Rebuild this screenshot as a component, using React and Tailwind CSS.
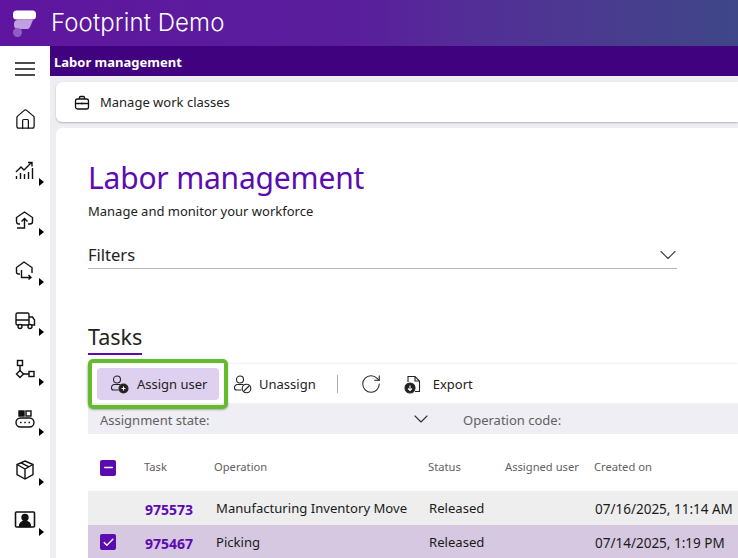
import { Home, RotateCw, ChevronDown, Check, Minus } from 'lucide-react';

const FONT = "font-['Noto_Sans','Open_Sans',sans-serif]";

const iconProps = { width: 22, height: 22, viewBox: '0 0 22 22', fill: 'none', stroke: '#111', strokeWidth: 1.4 };

const NAV_ICONS = [
  <svg {...iconProps}>
    <path d="M2 13l5-5 3 3 7-7M14 3.500h4v4" />
    <path d="M2.500 20v-3M6.500 20v-6M10.500 20v-5M14.500 20v-7M18.500 20V9" />
  </svg>,
  <svg {...iconProps}>
    <path d="M6 15H4.500A2.500 2.500 0 0 1 2.500 12.500V8.500L10.500 3l8 5.500v4a2.500 2.500 0 0 1-2.500 2.500h-2" />
    <path d="M3 19h7.500V10M7.500 12.500l3-3 3 3" />
  </svg>,
  <svg {...iconProps}>
    <path d="M6 15H4.500A2 2 0 0 1 2.500 13V8.500L10 3l8 5.500V14" />
    <path d="M7.500 11v7.500H17M14.500 16l2.500 2.500-2.500 2" />
  </svg>,
  <svg {...iconProps}>
    <rect x="2" y="4" width="13" height="12" rx="1.500" />
    <path d="M15 8h3.500l2 3v5H15M2 11h13" />
    <circle cx="6" cy="17.500" r="2" fill="#fff" />
    <circle cx="16" cy="17.500" r="2" fill="#fff" />
  </svg>,
  <svg {...iconProps}>
    <rect x="3.500" y="1.500" width="5" height="5" />
    <path d="M6 6.500v5.500M9 15h6" />
    <path d="M6 11.500l3.500 3.500L6 18.500 2.500 15z" />
    <rect x="15" y="12.500" width="5" height="5" />
  </svg>,
  <svg {...iconProps}>
    <rect x="5" y="2" width="5" height="5" fill="#111" />
    <rect x="12" y="2" width="5" height="5" />
    <rect x="2" y="9" width="18" height="9" rx="4.500" />
    <path d="M6 13.500h1.500M10.250 13.500h1.500M14.500 13.500H16" />
  </svg>,
  <svg {...iconProps}>
    <path d="M11 2l8 3.500v10L11 20l-8-4.500v-10z" />
    <path d="M3 5.500L11 10l8-4.500M11 10v10M7 3.800l8 4" />
  </svg>,
  <svg {...iconProps}>
    <rect x="1.500" y="3" width="19" height="15" rx="1" strokeWidth="1.600" />
    <circle cx="11" cy="8.500" r="3" fill="#111" />
    <path d="M5.500 17.500c0-3.500 2.500-5 5.500-5s5.500 1.500 5.500 5z" fill="#111" />
  </svg>,
];

function NavItem({ icon }) {
  return (
    <div className="relative flex h-[50px] w-[50px] shrink-0 items-center justify-center">
      {icon}
      <span className="absolute bottom-[9px] right-[6px] h-0 w-0 border-y-[4px] border-l-[5px] border-y-transparent border-l-black" />
    </div>
  );
}

function UserIcon({ badge }) {
  return (
    <svg width="20" height="20" viewBox="0 0 20 20" fill="none" stroke="#222" strokeWidth="1.100">
      <circle cx="8" cy="5.500" r="3.500" />
      <path d="M9.500 16H4.500A2 2 0 0 1 2.500 14v-.5A3 3 0 0 1 5.500 10.500h6" />
      {badge === 'add' && (
        <>
          <circle cx="14.500" cy="14.500" r="4.500" fill="#222" />
          <path d="M12.500 14.500h4M14.500 12.500v4" stroke="#fff" />
        </>
      )}
      {badge === 'block' && (
        <>
          <circle cx="14.500" cy="14.500" r="4.300" fill="#fff" />
          <path d="M11.500 17.500l6-6" />
        </>
      )}
    </svg>
  );
}

function ExportIcon() {
  return (
    <svg width="18" height="20" viewBox="0 0 18 20" fill="none" stroke="#222" strokeWidth="1.100">
      <path d="M4 8V2.500h7l4.500 4.500v10.500H11M11 2.500V7h4.500" />
      <circle cx="6" cy="14" r="5" fill="#222" />
      <path d="M6 11.500v5M4 14.500l2 2 2-2" stroke="#fff" />
    </svg>
  );
}

function Row({ id, operation, created, selected }) {
  return (
    <div className={`grid h-[34px] grid-cols-[57px_71px_213px_77px_89px_1fr] items-center whitespace-nowrap pt-[2px] text-[13.100px] text-[#1b1b1b] ${selected ? 'bg-[#d6c8e0]' : 'bg-[#eeeeee]'}`}>
      <div className="-mt-[2px] pl-3">
        {selected && (
          <span className="flex h-4 w-4 items-center justify-center rounded-[2px] bg-[#5c0bb0]">
            <Check size={13} color="#fff" strokeWidth={2.500} />
          </span>
        )}
      </div>
      <span className="text-[14px] font-bold text-[#5c0bb0]">{id}</span>
      <span>{operation}</span>
      <span>Released</span>
      <span />
      <span className="text-[13.500px]">{created}</span>
    </div>
  );
}

export default function App() {
  return (
    <div className={`flex h-[558px] w-[738px] flex-col overflow-hidden bg-white ${FONT}`}>
      <header className="flex h-[46px] shrink-0 items-center bg-gradient-to-r from-[#5f159f] via-[#591f9c] to-[#3e4688] pl-[13px]">
        <svg width="24" height="27" viewBox="0 0 24 27">
          <rect x="0" y="0.500" width="23" height="9" rx="3.500" fill="#fff" />
          <path d="M1 14a4 4 0 0 1 4-4h15l-3 7a3 3 0 0 1-3 2H5a4 4 0 0 1-4-4z" fill="#bfa0e0" />
          <circle cx="4.500" cy="22.500" r="4.500" fill="#8d5fc0" />
        </svg>
        <span className="ml-[14px] font-['Inter',sans-serif] text-[24px] font-light tracking-[0.1px] text-white">Footprint Demo</span>
      </header>

      <div className="flex min-h-0 flex-1">
        <nav className="flex w-[50px] shrink-0 flex-col items-center bg-white">
          <div className="flex h-[45px] w-[50px] items-center justify-center">
            <svg width="20" height="14" viewBox="0 0 20 14" stroke="#111" strokeWidth="1.300">
              <path d="M0 1h20M0 7h20M0 13h20" />
            </svg>
          </div>
          <div className="flex h-[54px] w-[50px] shrink-0 items-center justify-center pt-[3px]">
            <Home size={23} strokeWidth={1.300} color="#111" />
          </div>
          {NAV_ICONS.map((icon, i) => (
            <NavItem key={i} icon={icon} />
          ))}
        </nav>

        <div className="flex min-w-0 flex-1 flex-col bg-[#eeedf3]">
          <div className="flex h-[30px] shrink-0 items-center bg-[#40027e] pl-1 pt-[4px] text-[13px] font-bold text-white">
            Labor management
          </div>

          <div className="ml-[6px] mt-[6px] flex h-[40px] shrink-0 items-center rounded-l-md bg-white pl-[18px] pt-[1px] text-[13px] text-[#222] shadow-[0_1px_2px_rgba(0,0,0,0.25)]">
            <svg width="16" height="16" viewBox="0 0 16 16" fill="none" stroke="#111" strokeWidth="1.300">
              <rect x="1.500" y="4" width="13" height="10" rx="2" />
              <path d="M5.500 4V2.500a1 1 0 0 1 1-1h3a1 1 0 0 1 1 1V4M1.500 8.500h13M8 7.500v2" />
            </svg>
            <span className="ml-[10px]">Manage work classes</span>
          </div>

          <main className="ml-[6px] mt-[6px] min-h-0 flex-1 rounded-tl-md bg-white pl-8 pt-[30px]">
            <h1 className="text-[30px] leading-10 tracking-[-0.2px] text-[#5c0bb0]">Labor management</h1>
            <p className="mt-[3px] text-[13px] leading-[20px] text-[#222]">Manage and monitor your workforce</p>

            <div className="mt-[14px] flex h-[34px] w-[589px] items-center justify-between border-b border-[#b5b5b5] pt-[6px] text-[16.500px] text-[#222]">
              <span className="mt-[2px]">Filters</span>
              <ChevronDown size={28} strokeWidth={1} color="#444" className="-mr-[5px]" />
            </div>

            <div className="mt-[52px] w-fit border-b-2 border-[#5c0bb0] text-[21.500px] leading-[32px] text-[#222]">
              Tasks
            </div>

            <div className="mt-[9px] flex h-[39px] items-center whitespace-nowrap bg-white pl-[9px] text-[13px] text-[#222] shadow-[0_1px_3px_rgba(0,0,0,0.25)]">
              <button className="relative flex h-8 w-[122px] items-center rounded-[4px] bg-[#ded0ef] pl-3">
                <span className="absolute -inset-[9px] rounded-[5px] border-4 border-[#64bc2d] shadow-[0_1px_2px_rgba(0,0,0,0.3)]" />
                <UserIcon badge="add" />
                <span className="ml-2 mt-[2px]">Assign user</span>
              </button>
              <button className="ml-[13px] flex items-center">
                <UserIcon badge="block" />
                <span className="ml-[7px] mt-[2px]">Unassign</span>
              </button>
              <span className="ml-[21px] h-[18px] w-px bg-[#aaa]" />
              <RotateCw size={22} strokeWidth={1.100} color="#222" className="ml-[22px]" />
              <span className="ml-[22px]"><ExportIcon /></span>
              <span className="ml-[11px] mt-[2px]">Export</span>
            </div>

            <div className="flex h-[31px] items-center whitespace-nowrap bg-[#efeef4] pt-[4px] text-[13px] text-[#616161]">
              <span className="w-[321px] pl-3">Assignment state:</span>
              <ChevronDown size={24} strokeWidth={1.100} color="#333" className="-mt-1" />
              <span className="ml-[30px]">Operation code:</span>
            </div>

            <div className="grid h-[57px] grid-cols-[56px_70px_214px_77px_89px_1fr] items-center whitespace-nowrap pt-[10px] text-[11.200px] text-[#616161]">
              <div className="pl-3">
                <span className="flex h-4 w-4 items-center justify-center rounded-[2px] bg-[#5c0bb0]">
                  <Minus size={13} color="#fff" strokeWidth={2.500} />
                </span>
              </div>
              <span>Task</span>
              <span>Operation</span>
              <span>Status</span>
              <span>Assigned user</span>
              <span>Created on</span>
            </div>

            <Row id="975573" operation="Manufacturing Inventory Move" created="07/16/2025, 11:14 AM" />
            <Row id="975467" operation="Picking" created="07/14/2025, 1:19 PM" selected />
          </main>
        </div>
      </div>
    </div>
  );
}
